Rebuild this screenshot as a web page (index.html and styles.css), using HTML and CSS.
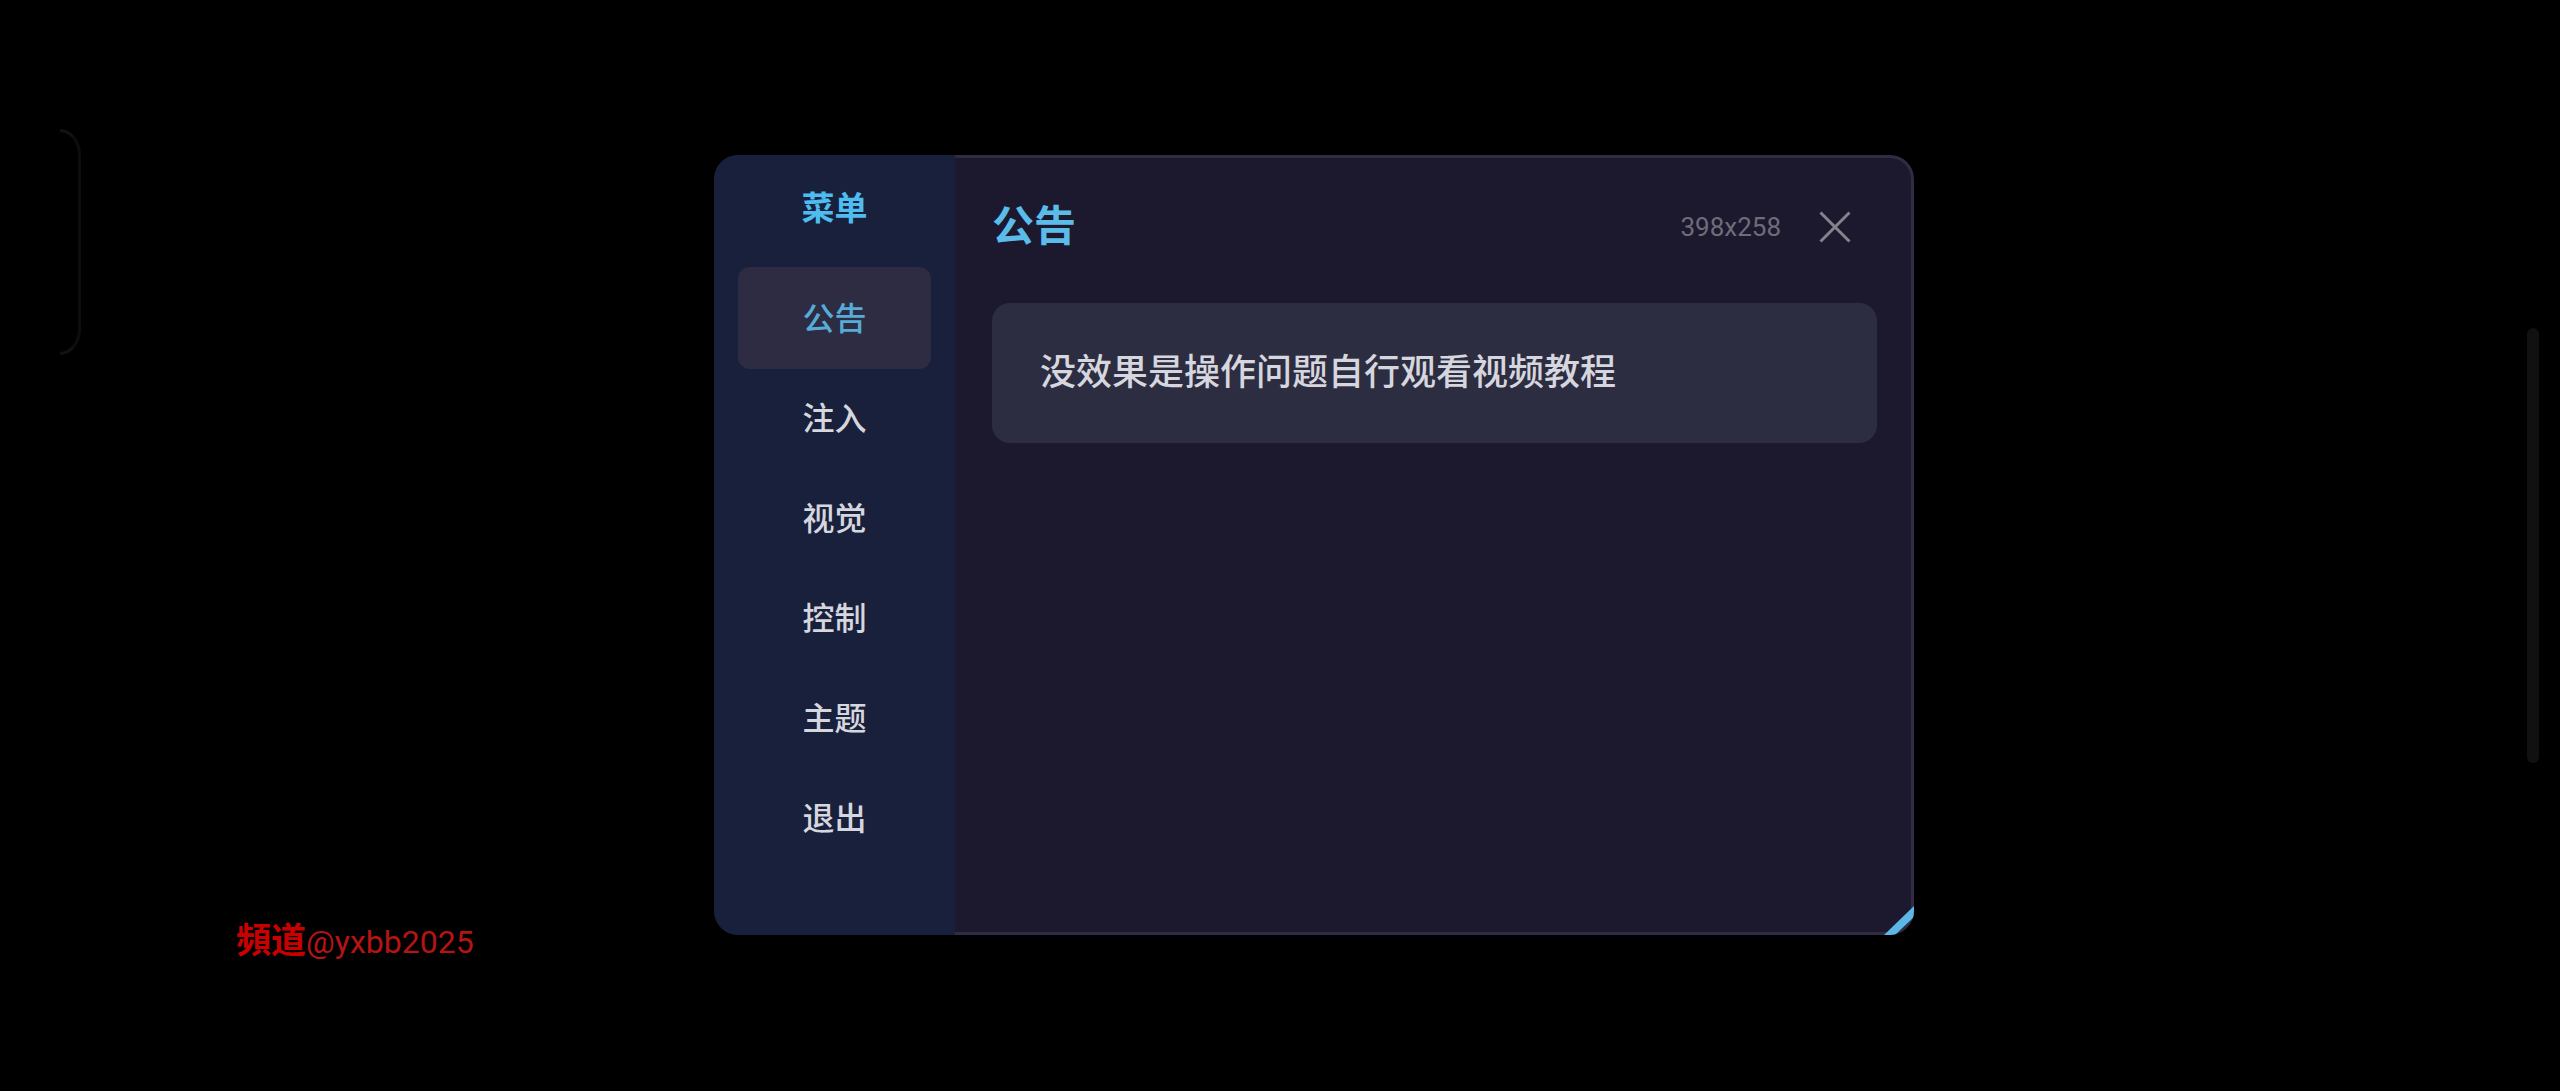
FILE: index.html
```html
<!DOCTYPE html>
<html lang="zh-CN">
<head>
  <meta charset="UTF-8">
  <meta name="viewport" content="width=device-width, initial-scale=1.0">
  <title>菜单</title>
  <link rel="stylesheet" href="styles.css">
</head>
<body>
  <div class="edge-handle"></div>

  <div class="panel">
    <nav class="sidebar">
      <h2 class="menu-title">菜单</h2>
      <button class="menu-item active" type="button">公告</button>
      <button class="menu-item" type="button">注入</button>
      <button class="menu-item" type="button">视觉</button>
      <button class="menu-item" type="button">控制</button>
      <button class="menu-item" type="button">主题</button>
      <button class="menu-item" type="button">退出</button>
    </nav>

    <main class="content">
      <header class="content-header">
        <h1>公告</h1>
        <span class="size">398x258</span>
        <button class="close-btn" type="button" aria-label="关闭">
          <svg width="32" height="32" viewBox="0 0 32 32">
            <path d="M1.5 1.5L30.5 30.5M30.5 1.5L1.5 30.5" fill="none" stroke="currentColor" stroke-width="3"/>
          </svg>
        </button>
      </header>
      <p class="notice">没效果是操作问题自行观看视频教程</p>
    </main>

    <!-- resize corner -->
    <svg class="resize" width="32" height="32" viewBox="0 0 32 32">
      <path d="M2 32L32 3V14L13 32Z" fill="#5bb8e6"/>
    </svg>
  </div>

  <div class="watermark"><b>頻道</b>@yxbb2025</div>
  <div class="side-bar"></div>
</body>
</html>
```

FILE: styles.css
```css
* {
  box-sizing: border-box;
}
body {
  margin: 0;
  min-height: 100vh;
  background: #000;
  font-family: Roboto, "Noto Sans CJK SC", sans-serif;
  color: #d6d6de;
  position: relative;
  overflow: hidden;
}
button {
  border: none;
  background: none;
  padding: 0;
  color: inherit;
  font-family: inherit;
  cursor: pointer;
}

/* Floating menu window */
.panel {
  position: absolute;
  top: 155px;
  left: 714px;
  width: 46.875%;
  min-height: 780px;
  display: flex;
  background: #1c192e;
  border-radius: 24px;
  overflow: hidden;
}
.sidebar {
  width: 241px;
  padding: 24px;
  background: #18203c;
  border-radius: 24px 0 0 24px;
  display: flex;
  flex-direction: column;
}
.menu-title {
  margin: 6px 0 34px;
  font-size: 33px;
  line-height: 48px;
  font-weight: 700;
  text-align: center;
  color: #4fbcf0;
}
.menu-item {
  height: 102px;
  margin-bottom: -2px;
  padding-bottom: 4px;
  border-radius: 12px;
  font-size: 32px;
  font-weight: 500;
}
.menu-item.active {
  background: #2d2c42;
  color: #56acd6;
}
.content {
  flex: 1;
  padding: 35px 34px 35px 37px;
  border: 3px solid #302c44;
  border-left: none;
  border-radius: 0 24px 24px 0;
}
.content-header {
  display: flex;
  align-items: center;
  height: 68px;
  padding-right: 26px;
}
.content-header h1 {
  flex: 1;
  margin: 0;
  font-size: 42px;
  line-height: 60px;
  font-weight: 700;
  color: #5bbcea;
}
.size {
  font-size: 26px;
  color: #6f6c79;
}
.close-btn {
  display: flex;
  margin-left: 38px;
  color: #85828d;
}
.notice {
  margin: 42px 0 0;
  padding: 42px 48px;
  background: #2d2d42;
  border-radius: 18px;
  font-size: 36px;
  line-height: 56px;
  font-weight: 500;
}
.resize {
  position: absolute;
  right: 0;
  bottom: 0;
}

/* Screen edges */
.edge-handle {
  position: absolute;
  top: 129px;
  left: 60px;
  width: 21px;
  height: 226px;
  border: 3px solid #0b0f0b;
  border-left: none;
  border-radius: 0 21px 21px 0 / 0 26px 26px 0;
  border-top-color: #101310;
  border-bottom-color: #101310;
}
.side-bar {
  position: absolute;
  top: 328px;
  right: 21px;
  width: 12px;
  height: 435px;
  background: #111;
  border-radius: 6px;
}
.watermark {
  position: absolute;
  left: 236px;
  top: 917px;
  font-size: 32px;
  line-height: 50px;
  color: #b41414;
}
.watermark b {
  font-size: 35px;
  font-weight: 700;
  color: #c80000;
}
```
